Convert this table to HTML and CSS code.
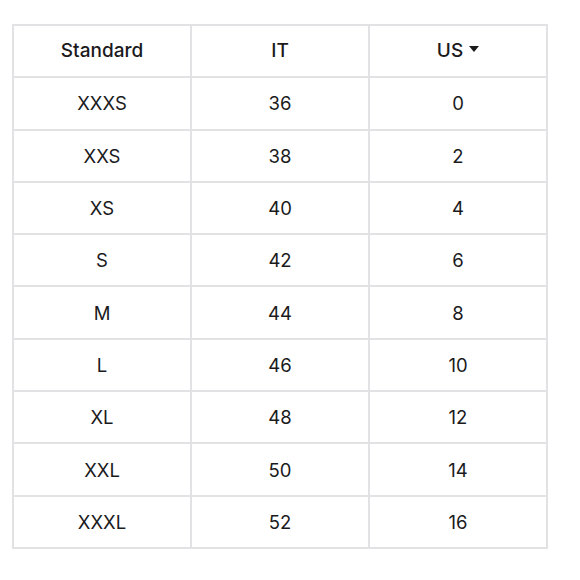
FILE: index.html
```html
<!DOCTYPE html>
<html lang="en">
<head>
<meta charset="utf-8">
<title>Size chart</title>
<link rel="stylesheet" href="styles.css">
</head>
<body>
<div class="page">
  <table class="sizes">
    <thead>
      <tr>
        <th>Standard</th>
        <th>IT</th>
        <th><span class="sort">US<span class="caret"></span></span></th>
      </tr>
    </thead>
    <tbody>
      <tr><td>XXXS</td><td>36</td><td>0</td></tr>
      <tr><td>XXS</td><td>38</td><td>2</td></tr>
      <tr><td>XS</td><td>40</td><td>4</td></tr>
      <tr><td>S</td><td>42</td><td>6</td></tr>
      <tr><td>M</td><td>44</td><td>8</td></tr>
      <tr><td>L</td><td>46</td><td>10</td></tr>
      <tr><td>XL</td><td>48</td><td>12</td></tr>
      <tr><td>XXL</td><td>50</td><td>14</td></tr>
      <tr><td>XXXL</td><td>52</td><td>16</td></tr>
    </tbody>
  </table>
</div>
</body>
</html>
```
FILE: styles.css
```css
html, body {
  margin: 0;
  padding: 0;
  background: #ffffff;
}
.page {
  padding: 24px 12px;
  font-family: Inter, "Liberation Sans", Arial, sans-serif;
  color: #1a1a1c;
}
.sizes {
  border-collapse: collapse;
  table-layout: fixed;
  width: 536px;
}
.sizes th,
.sizes td {
  border: 2px solid #e2e2e5;
  height: 50.3px;
  padding: 0;
  text-align: center;
  vertical-align: middle;
  font-size: 18.5px;
  line-height: 22px;
}
.sizes th {
  font-weight: 500;
  font-size: 19px;
}
.sizes td {
  font-weight: 400;
}
.sort {
  display: inline-flex;
  align-items: center;
  gap: 6px;
}
.caret {
  width: 0;
  height: 0;
  border-left: 5px solid transparent;
  border-right: 5px solid transparent;
  border-top: 6px solid #1a1a1c;
  margin-top: -4px;
}
```
